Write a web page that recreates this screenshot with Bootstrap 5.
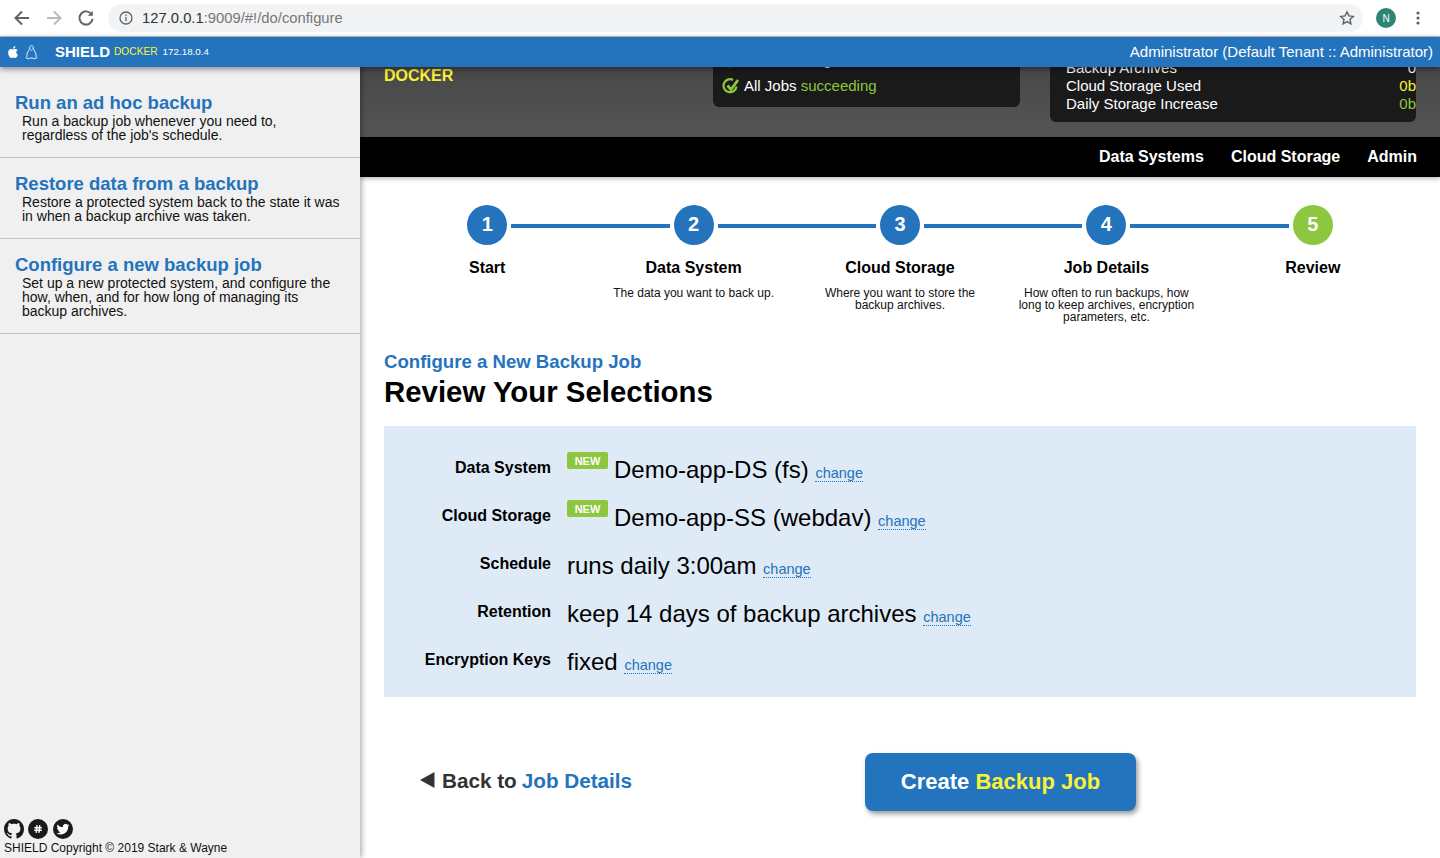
<!DOCTYPE html>
<html lang="en">
<head>
<meta charset="utf-8">
<title>SHIELD</title>
<link href="https://cdn.jsdelivr.net/npm/bootstrap@5.3.0/dist/css/bootstrap.min.css" rel="stylesheet">
<style>
html,body{height:858px;overflow:hidden}
body{font-family:"Liberation Sans",Arial,sans-serif;color:#000;background:#fff;display:flex;flex-direction:column}
a{text-decoration:none}
.chrome-bar{height:37px;flex:none;border-bottom:1px solid #bcbcbc;background:#fff;padding:4px 0 4px 0}
.chrome-ico{width:20px;height:20px;flex:none;margin-left:12px}
.omni{margin-left:12px;width:1255px;height:28px;border-radius:14px;background:#f1f3f4;padding:0 8px 0 11px;font-size:14.8px;color:#777}
.omni b{font-weight:400;color:#333}
.omni .addr{margin-left:1px}
.avatar{width:20px;height:20px;border-radius:50%;background:#2b8476;color:#fff;font-size:10px;margin-left:13px;flex:none}
.dots{margin-left:14px}
.top-strip{height:30px;flex:none;background:#2473bd;color:#fff;padding:0 7px;position:relative;z-index:5;box-shadow:0 2px 6px rgba(0,0,0,.45)}
.tux{margin-left:6px}
.brand-name{font-size:15px;font-weight:700;margin-left:17px}
.brand-env{font-size:10.2px;color:#fbf236;margin-left:4px}
.brand-ip{font-size:9.8px;margin-left:5px}
.who{font-size:15px}
.shell{flex:1 1 auto;min-height:0}
.side{width:360px;flex:none;background:#f0f0f0;position:relative;z-index:3;box-shadow:2px 0 5px rgba(0,0,0,.3)}
.side-item{padding:13px 15px 15px;border-bottom:1px solid #c4c4c4}
.side-item.first{padding-top:23px}
.side-item h3{font-size:18.5px;line-height:24px;font-weight:700;color:#2473bd;margin:0 0 -1px;padding-top:1px}
.side-item p{font-size:14px;line-height:14px;margin:0 0 0 7px;color:#111}
.side-foot{margin-top:auto;padding:0 4px 2px;font-size:12px;line-height:16px;color:#111}
.soc{gap:4px;height:20px;margin-bottom:1px}
.soc svg{width:20px;height:20px;display:block}
.soc .bird{margin-left:1px}
.work{flex:1 1 auto;min-width:0}
.hero{height:70px;background:linear-gradient(#484848,#555);overflow:hidden;padding:0 24px;color:#fff;font-size:15px;line-height:18px}
.hero-name{color:#fbf236;font-weight:700;font-size:16px;line-height:18px;align-self:flex-start;width:329px;flex:none}
.hero-pane{background:#1a1a1a;border-radius:0 0 6px 6px}
.pane-a{width:307px;margin-bottom:30px;padding:0 9px 12px;flex:none}
.pane-a .gap-row{margin-top:8px}
.pane-b{width:366px;margin-bottom:15px;margin-left:30px;padding:0 0 9px 16px;flex:none}
.pane-a .tick{width:18px;height:18px;margin-right:4px;flex:none}
.c-ok{color:#8dc63f}.c-y{color:#fbf236}
.subnav{height:40px;background:#000;color:#fff;font-weight:700;font-size:16px;padding:0 23px;gap:27px;box-shadow:0 2px 4px rgba(0,0,0,.25);position:relative;z-index:1}
.page{padding:28px 24px 0}
.stepper{display:grid;grid-template-columns:repeat(5,1fr);height:145px}
.step-head{height:40px}
.step-line{flex:1 1 0;height:4px;background:#2473bd;margin-top:2px}
.step-line.l{margin-right:4px}
.step-line.r{margin-left:4px}
.step-line.off{background:transparent}
.step-dot{width:40px;height:40px;flex:none;border-radius:50%;background:#2473bd;color:#fff;font-weight:700;font-size:20px;padding-bottom:2px}
.step-dot.last{background:#8dc63f}
.step-title{font-size:16px;line-height:20px;font-weight:700;margin-top:13px}
.step-desc{font-size:12px;line-height:12px;margin:9px auto 0;max-width:182px;color:#111}
.kick{font-size:18.6px;line-height:24px;font-weight:700;color:#2473bd;margin:0}
.big{font-size:29.4px;line-height:36px;font-weight:700;margin:0 0 16px}
.review{height:271px;background:#deeaf6;padding-top:20px}
.rv-row{height:48px}
.rv-label{width:167px;flex:none;text-align:right;font-size:16px;line-height:46px;font-weight:700;margin-top:-1px}
.rv-val{margin-left:16px;font-size:24px;line-height:48px}
.new-tag{display:inline-block;background:#8dc63f;color:#fff;font-size:11px;font-weight:700;line-height:16px;padding-top:1px;width:41px;text-align:center;border-radius:2px;vertical-align:top;margin:6px 6px 0 0}
.chg{font-size:14.5px;color:#2473bd;border-bottom:1px dotted #2473bd;line-height:16px;display:inline-block}
.acts{margin-top:56px}
.back{width:481px;padding-left:36px;font-size:20.7px;font-weight:700;color:#333;margin-bottom:3px}
.back svg{width:15px;height:16px;margin-right:7px;flex:none}
.back a{color:#2473bd;margin-left:5px}
.go{width:271px;height:58px;background:#2473bd;color:#fff;border:0;border-radius:8px;font-size:22px;font-weight:700;padding:0 0 2px;box-shadow:2px 3px 5px rgba(0,0,0,.4)}
.go span{color:#fbf236}
</style>
</head>
<body>
<div class="chrome-bar d-flex align-items-center">
  <svg class="chrome-ico" viewBox="0 0 20 20" fill="none" stroke="#5f6368" stroke-width="2"><path d="M17 10H4M10 3.500 3.500 10l6.500 6.500"/></svg>
  <svg class="chrome-ico" viewBox="0 0 20 20" fill="none" stroke="#b8babd" stroke-width="2"><path d="M3 10h13M10 3.500l6.500 6.500-6.500 6.500"/></svg>
  <svg class="chrome-ico" viewBox="0 0 20 20" fill="none" stroke="#5f6368" stroke-width="2"><path d="M15.500 6.200A6.600 6.600 0 1 0 16.600 11"/><path d="M16.800 2.800v5h-5" fill="#5f6368" stroke="none"/></svg>
  <div class="omni d-flex align-items-center">
    <svg width="14" height="14" viewBox="0 0 14 14" fill="none" stroke="#5f6368" stroke-width="1.300" class="me-2"><circle cx="7" cy="7" r="6"/><path d="M7 6v4.200M7 3.600v1.300"/></svg>
    <span class="addr"><b>127.0.0.1</b>:9009/#!/do/configure</span>
    <svg class="ms-auto" width="16" height="16" viewBox="0 0 16 16" fill="none" stroke="#5f6368" stroke-width="1.400"><path d="M8 1.800l1.900 4.100 4.400.5-3.300 3 .9 4.400L8 11.600l-3.900 2.200.9-4.400-3.300-3 4.400-.5z"/></svg>
  </div>
  <div class="avatar d-flex align-items-center justify-content-center">N</div>
  <svg class="dots" width="16" height="16" viewBox="0 0 16 16" fill="#5f6368"><circle cx="8" cy="3" r="1.600"/><circle cx="8" cy="8" r="1.600"/><circle cx="8" cy="13" r="1.600"/></svg>
</div>

<div class="top-strip d-flex align-items-center">
  <svg width="12" height="14" viewBox="0 0 24 24" fill="#fff"><path d="M12.152 6.896c-.948 0-2.415-1.078-3.960-1.040-2.040.027-3.910 1.183-4.961 3.014-2.117 3.675-.546 9.103 1.519 12.090 1.013 1.454 2.208 3.090 3.792 3.039 1.520-.065 2.090-.987 3.935-.987 1.831 0 2.350.987 3.960.948 1.637-.026 2.676-1.480 3.676-2.948 1.156-1.688 1.636-3.325 1.662-3.415-.039-.013-3.182-1.221-3.220-4.857-.026-3.040 2.480-4.494 2.597-4.559-1.429-2.090-3.623-2.324-4.390-2.376-2-.156-3.675 1.090-4.610 1.090zM15.530 3.830c.843-1.012 1.400-2.427 1.245-3.830-1.207.052-2.662.805-3.532 1.818-.780.896-1.454 2.338-1.273 3.714 1.338.104 2.715-.688 3.559-1.701"/></svg>
  <svg class="tux" width="13" height="15" viewBox="0 0 13 15" fill="none" stroke="#fff" stroke-width=".9"><path d="M6.500.8c-1.500 0-2 1.200-2 2.600 0 1.700-2.600 4.200-2.600 6.600 0 .8.200 1.300.2 1.300L1 12.600l2.400 1.300 1.600-.8h3l1.600.8 2.400-1.300-1.100-1.300s.2-.5.2-1.300c0-2.400-2.600-4.900-2.600-6.600 0-1.400-.5-2.600-2-2.600z"/><path d="M5.400 3.300h.5M7.100 3.300h.5M5.500 4.800l1 .6 1-.6" /></svg>
  <span class="brand-name">SHIELD</span><span class="brand-env">DOCKER</span><span class="brand-ip">172.18.0.4</span>
  <span class="who ms-auto">Administrator (Default Tenant :: Administrator)</span>
</div>

<div class="shell d-flex">
  <aside class="side d-flex flex-column">
    <div class="side-item first">
      <h3>Run an ad hoc backup</h3>
      <p>Run a backup job whenever you need to, regardless of the job's schedule.</p>
    </div>
    <div class="side-item">
      <h3>Restore data from a backup</h3>
      <p>Restore a protected system back to the state it was in when a backup archive was taken.</p>
    </div>
    <div class="side-item">
      <h3>Configure a new backup job</h3>
      <p>Set up a new protected system, and configure the how, when, and for how long of managing its backup archives.</p>
    </div>
    <div class="side-foot">
      <div class="soc d-flex">
        <svg viewBox="0 0 16 16" fill="#1a1a1a"><path d="M8 0C3.580 0 0 3.580 0 8c0 3.540 2.290 6.530 5.470 7.590.4.070.55-.17.55-.38 0-.19-.01-.82-.01-1.490-2.010.37-2.530-.49-2.690-.94-.09-.23-.48-.94-.82-1.130-.28-.15-.68-.52-.01-.53.63-.01 1.080.58 1.230.82.72 1.210 1.870.87 2.330.66.070-.52.28-.87.51-1.070-1.780-.2-3.640-.89-3.640-3.950 0-.87.31-1.590.82-2.150-.08-.2-.36-1.020.08-2.120 0 0 .67-.21 2.200.82.64-.18 1.320-.27 2-.27.68 0 1.360.09 2 .27 1.530-1.040 2.200-.82 2.200-.82.44 1.100.16 1.920.08 2.120.51.56.82 1.270.82 2.150 0 3.070-1.870 3.750-3.650 3.950.29.25.54.73.54 1.480 0 1.070-.01 1.930-.01 2.200 0 .21.15.46.55.38A8.013 8.013 0 0016 8c0-4.420-3.580-8-8-8z"/></svg>
        <svg viewBox="0 0 20 20"><circle cx="10" cy="10" r="10" fill="#1a1a1a"/><path d="M8.900 6.800 8.300 13.200M11.700 6.800l-.6 6.400M6.800 8.800h6.400M6.800 11.200h6.400" stroke="#fff" stroke-width="1.500" stroke-linecap="round"/></svg>
        <svg class="bird" viewBox="0 0 20 20"><circle cx="10" cy="10" r="10" fill="#1a1a1a"/><g transform="translate(3.500 3.700) scale(.54)"><path fill="#fff" d="M23.953 4.570a10 10 0 01-2.825.775 4.958 4.958 0 002.163-2.723c-.951.555-2.005.959-3.127 1.184a4.920 4.920 0 00-8.384 4.482C7.690 8.095 4.067 6.130 1.640 3.162a4.822 4.822 0 00-.666 2.475c0 1.710.87 3.213 2.188 4.096a4.904 4.904 0 01-2.228-.616v.06a4.923 4.923 0 003.946 4.827 4.996 4.996 0 01-2.212.085 4.936 4.936 0 004.604 3.417 9.867 9.867 0 01-6.102 2.105c-.39 0-.779-.023-1.170-.067a13.995 13.995 0 007.557 2.209c9.053 0 13.998-7.496 13.998-13.985 0-.21 0-.42-.015-.63A9.935 9.935 0 0024 4.590z"/></g></svg>
      </div>
      SHIELD Copyright © 2019 Stark &amp; Wayne
    </div>
  </aside>

  <main class="work">
    <div class="hero d-flex align-items-end">
      <div class="hero-name">DOCKER</div>
      <div class="hero-pane pane-a">
        <div class="d-flex align-items-center"><svg class="tick" viewBox="0 0 18 18" fill="none" stroke="#8dc63f" stroke-width="2.200"><path d="M14.500 9.500a6.500 6.500 0 1 1-3.500-6.600"/><path d="M5.500 8.500 9 12.500 16 3" stroke-width="2.800"/></svg><span>Cloud Storage ok</span></div>
        <div class="gap-row d-flex align-items-center"><svg class="tick" viewBox="0 0 18 18" fill="none" stroke="#8dc63f" stroke-width="2.200"><path d="M14.500 9.500a6.500 6.500 0 1 1-3.500-6.600"/><path d="M5.500 8.500 9 12.500 16 3" stroke-width="2.800"/></svg><span>All Jobs <span class="c-ok">succeeding</span></span></div>
      </div>
      <div class="hero-pane pane-b">
        <div class="d-flex justify-content-between"><span>Backup Archives</span><span>0</span></div>
        <div class="d-flex justify-content-between"><span>Cloud Storage Used</span><span class="c-y">0b</span></div>
        <div class="d-flex justify-content-between"><span>Daily Storage Increase</span><span class="c-ok">0b</span></div>
      </div>
    </div>
    <nav class="subnav d-flex align-items-center justify-content-end">
      <span>Data Systems</span><span>Cloud Storage</span><span>Admin</span>
    </nav>

    <div class="page">
      <div class="stepper text-center">
        <div>
          <div class="step-head d-flex align-items-center"><span class="step-line l off"></span><span class="step-dot d-flex align-items-center justify-content-center">1</span><span class="step-line r"></span></div>
          <div class="step-title">Start</div>
        </div>
        <div>
          <div class="step-head d-flex align-items-center"><span class="step-line l"></span><span class="step-dot d-flex align-items-center justify-content-center">2</span><span class="step-line r"></span></div>
          <div class="step-title">Data System</div>
          <div class="step-desc">The data you want to back up.</div>
        </div>
        <div>
          <div class="step-head d-flex align-items-center"><span class="step-line l"></span><span class="step-dot d-flex align-items-center justify-content-center">3</span><span class="step-line r"></span></div>
          <div class="step-title">Cloud Storage</div>
          <div class="step-desc">Where you want to store the backup archives.</div>
        </div>
        <div>
          <div class="step-head d-flex align-items-center"><span class="step-line l"></span><span class="step-dot d-flex align-items-center justify-content-center">4</span><span class="step-line r"></span></div>
          <div class="step-title">Job Details</div>
          <div class="step-desc">How often to run backups, how long to keep archives, encryption parameters, etc.</div>
        </div>
        <div>
          <div class="step-head d-flex align-items-center"><span class="step-line l"></span><span class="step-dot last d-flex align-items-center justify-content-center">5</span><span class="step-line r off"></span></div>
          <div class="step-title">Review</div>
        </div>
      </div>

      <h2 class="kick">Configure a New Backup Job</h2>
      <h1 class="big">Review Your Selections</h1>

      <div class="review">
        <div class="rv-row d-flex"><div class="rv-label">Data System</div><div class="rv-val"><span class="new-tag">NEW</span>Demo-app-DS (fs) <a class="chg" href="#">change</a></div></div>
        <div class="rv-row d-flex"><div class="rv-label">Cloud Storage</div><div class="rv-val"><span class="new-tag">NEW</span>Demo-app-SS (webdav) <a class="chg" href="#">change</a></div></div>
        <div class="rv-row d-flex"><div class="rv-label">Schedule</div><div class="rv-val">runs daily 3:00am <a class="chg" href="#">change</a></div></div>
        <div class="rv-row d-flex"><div class="rv-label">Retention</div><div class="rv-val">keep 14 days of backup archives <a class="chg" href="#">change</a></div></div>
        <div class="rv-row d-flex"><div class="rv-label">Encryption Keys</div><div class="rv-val">fixed <a class="chg" href="#">change</a></div></div>
      </div>

      <div class="acts d-flex align-items-center">
        <div class="back d-flex align-items-center">
          <svg viewBox="0 0 15 16" fill="#333"><path d="M14.500 0v16L0 8z"/></svg>Back to<a href="#">Job Details</a>
        </div>
        <button class="go" type="button">Create <span>Backup Job</span></button>
      </div>
    </div>
  </main>
</div>
<script src="https://cdn.jsdelivr.net/npm/bootstrap@5.3.0/dist/js/bootstrap.bundle.min.js"></script>
</body>
</html>
